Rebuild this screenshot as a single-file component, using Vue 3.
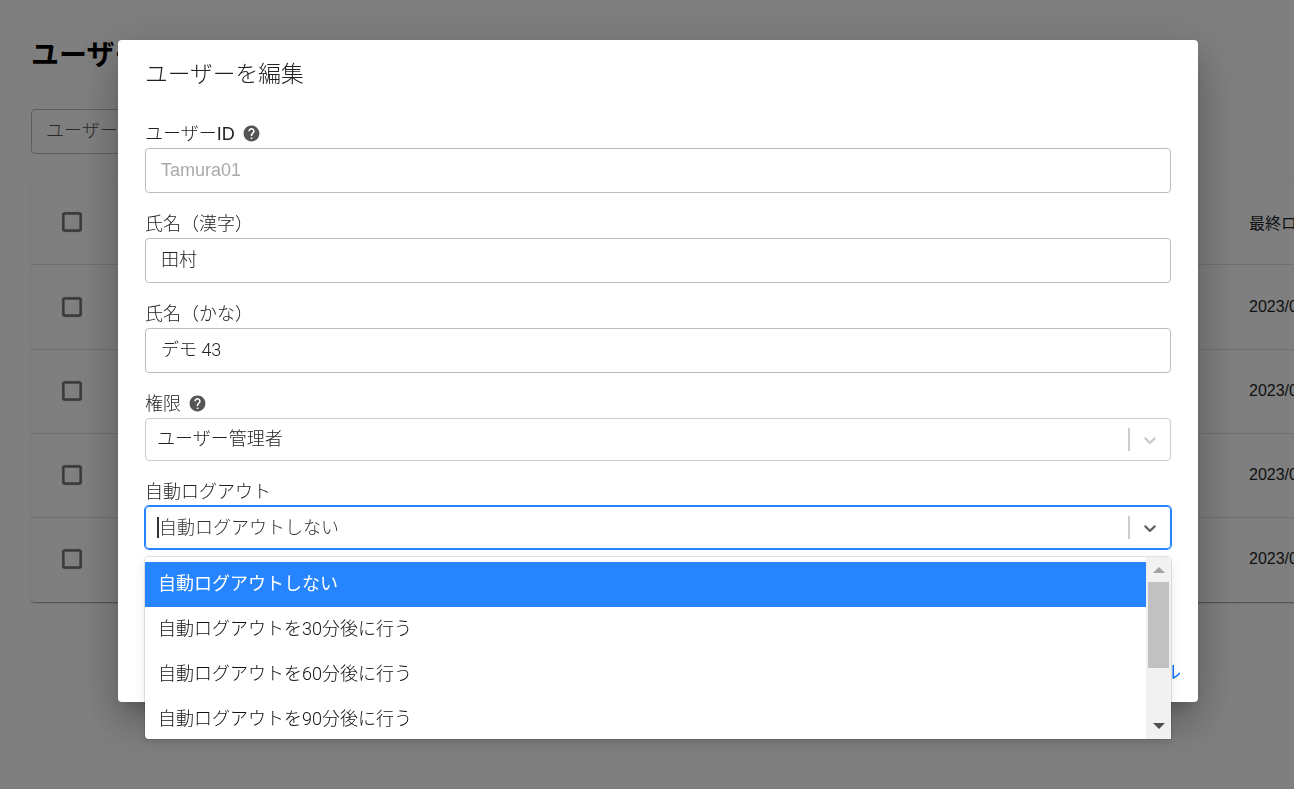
<script setup>
const helpPath = 'M12 2C6.48 2 2 6.48 2 12s4.48 10 10 10 10-4.48 10-10S17.52 2 12 2zm1 17h-2v-2h2v2zm2.07-7.75l-.9.92C13.45 12.9 13 13.5 13 15h-2v-.5c0-1.1.45-2.1 1.17-2.83l1.24-1.26c.37-.36.59-.86.59-1.41 0-1.1-.9-2-2-2s-2 .9-2 2H8c0-2.21 1.79-4 4-4s4 1.79 4 4c0 .88-.36 1.68-.93 2.25z'
const chevron = 'M4.516 7.548c0.436-0.446 1.043-0.481 1.576 0l3.908 3.747 3.908-3.747c0.533-0.481 1.141-0.446 1.574 0 0.436 0.445 0.408 1.197 0 1.615-0.406 0.418-4.695 4.502-4.695 4.502-0.217 0.223-0.502 0.335-0.787 0.335s-0.57-0.112-0.789-0.335c0 0-4.287-4.084-4.695-4.502s-0.436-1.17 0-1.615z'
const checkbox = 'M19 5v14H5V5h14m0-2H5c-1.1 0-2 .9-2 2v14c0 1.1.9 2 2 2h14c1.1 0 2-.9 2-2V5c0-1.1-.9-2-2-2z'
const rows = [
  { id: 1, text: '2023/03/01', cls: 'r1' },
  { id: 2, text: '2023/03/01', cls: 'r2' },
  { id: 3, text: '2023/03/01', cls: 'r2' },
  { id: 4, text: '2023/03/01', cls: 'r2' }
]
const options = ['自動ログアウトしない', '自動ログアウトを30分後に行う', '自動ログアウトを60分後に行う', '自動ログアウトを90分後に行う']
</script>

<template>
  <div class="page">
    <h1 class="title">ユーザー一覧</h1>
    <div class="search">ユーザーを検索</div>
    <div class="card">
      <div class="row head">
        <svg class="check" viewBox="0 0 24 24"><path :d="checkbox" /></svg>
        <span class="date">最終ログイン</span>
      </div>
      <div v-for="r in rows" :key="r.id" class="row" :class="r.cls">
        <svg class="check" viewBox="0 0 24 24"><path :d="checkbox" /></svg>
        <span class="date">{{ r.text }}</span>
      </div>
    </div>
  </div>

  <div class="overlay"></div>

  <div class="modal">
    <h2 class="modal-title">ユーザーを編集</h2>

    <div class="group">
      <label class="label">ユーザーID<svg class="help" viewBox="0 0 24 24"><path :d="helpPath" /></svg></label>
      <div class="input placeholder">Tamura01</div>
    </div>
    <div class="group">
      <label class="label">氏名（漢字）</label>
      <div class="input">田村</div>
    </div>
    <div class="group">
      <label class="label">氏名（かな）</label>
      <div class="input">デモ 43</div>
    </div>
    <div class="group">
      <label class="label">権限<svg class="help" viewBox="0 0 24 24"><path :d="helpPath" /></svg></label>
      <div class="select disabled">
        <span class="value">ユーザー管理者</span>
        <span class="sep"></span>
        <svg class="chev" viewBox="0 0 20 20"><path :d="chevron" /></svg>
      </div>
    </div>
    <div class="group">
      <label class="label">自動ログアウト</label>
      <div class="select focused">
        <span class="value"><i class="caret"></i>自動ログアウトしない</span>
        <span class="sep"></span>
        <svg class="chev" viewBox="0 0 20 20"><path :d="chevron" /></svg>
        <div class="menu">
          <div class="list">
            <div v-for="(o, i) in options" :key="o" class="option" :class="{ active: i === 0 }">{{ o }}</div>
          </div>
          <div class="scrollbar">
            <i class="tri up"></i>
            <i class="thumb"></i>
            <i class="tri down"></i>
          </div>
        </div>
      </div>
    </div>

    <div class="footer">
      <a class="cancel">キャンセル</a>
    </div>
  </div>
</template>

<style>
html, body { margin: 0; height: 100%; overflow: hidden; background: #fff; }
</style>

<style scoped>
.page, .modal {
  font-family: "Liberation Sans", "Noto Sans CJK JP", sans-serif;
  color: #212529;
}
.page {
  box-sizing: border-box;
  width: 1294px;
  height: 789px;
  padding: 38px 0 0 31px;
  overflow: hidden;
}
.title {
  margin: 0;
  font-size: 28px;
  line-height: 36px;
  font-weight: 700;
  color: #000;
}
.search {
  box-sizing: border-box;
  width: 420px;
  height: 45px;
  margin-top: 35px;
  padding: 0 14px;
  border: 1px solid #bdbdbd;
  border-radius: 4px;
  font-size: 18px;
  font-weight: 300;
  line-height: 43px;
  color: #555;
}
.card {
  width: 1500px;
  margin-top: 29px;
  border-radius: 4px;
  background: #fff;
  box-shadow: 0 2px 1px -1px rgba(0,0,0,.2), 0 1px 1px 0 rgba(0,0,0,.14), 0 1px 3px 0 rgba(0,0,0,.12);
}
.row {
  box-sizing: border-box;
  display: flex;
  align-items: center;
  padding-left: 28px;
  padding-bottom: 1px;
  height: 84px;
  border-bottom: 1px solid #e0e0e0;
  font-size: 16px;
}
.row:last-child { border-bottom: 0; padding-bottom: 2px; }
.head { height: 82px; padding-bottom: 3px; }
.r1 { height: 85px; padding-bottom: 0; }
.check { width: 26px; height: 26px; fill: rgba(0,0,0,.54); flex: none; stroke: rgba(0,0,0,.54); stroke-width: .3; }
.date { margin-left: 1164px; white-space: nowrap; }
.overlay {
  position: fixed;
  inset: 0;
  background: rgba(0,0,0,.5);
}
.modal {
  position: fixed;
  left: 118px;
  top: 40px;
  width: 1080px;
  height: 662px;
  box-sizing: border-box;
  padding: 19px 27px 0;
  display: flex;
  flex-direction: column;
  background: #fff;
  border-radius: 4px;
  box-shadow: 0 11px 15px -7px rgba(0,0,0,.2), 0 24px 38px 3px rgba(0,0,0,.14), 0 9px 46px 8px rgba(0,0,0,.12);
  color: #222;
  font-weight: 300;
}
.modal-title {
  margin: 0 0 32px;
  font-size: 22.75px;
  line-height: 30px;
  font-weight: 300;
}
.group { margin-bottom: 18px; }
.label {
  display: flex;
  align-items: center;
  gap: 7px;
  height: 24px;
  margin-bottom: 3px;
  padding-top: 1px;
  box-sizing: border-box;
  font-size: 18px;
  line-height: 24px;
  white-space: pre;
}
.help { width: 19px; height: 19px; fill: #555; flex: none; margin-top: -1px; }
.input {
  box-sizing: border-box;
  height: 45px;
  padding: 0 15px;
  border: 1px solid #bdbdbd;
  border-radius: 4px;
  font-family: Roboto, "Noto Sans CJK JP", sans-serif;
  font-size: 18px;
  line-height: 41px;
  color: #222;
}
.placeholder {
  font-family: "Liberation Sans", "Noto Sans CJK JP", sans-serif;
  line-height: 43px;
  color: #aaa;
}
.select {
  position: relative;
  box-sizing: border-box;
  height: 43px;
  display: flex;
  align-items: center;
  padding: 0 10px 0 11px;
  border: 1px solid #ccc;
  border-radius: 4px;
  font-size: 18px;
  color: #222;
}
.select.focused {
  border-color: #2684ff;
  box-shadow: 0 0 0 1px #2684ff;
  color: #333;
}
.value { flex: 1; display: flex; align-items: center; white-space: nowrap; margin-bottom: 5px; }
.focused .value { margin-bottom: 4px; }
.caret { width: 2px; height: 21px; background: #333; flex: none; margin-top: 4px; }
.sep { width: 2px; height: 23px; background: #ccc; flex: none; margin-right: 10px; }
.chev { width: 20px; height: 20px; flex: none; fill: #666; }
.disabled .chev { fill: #ccc; }
.menu {
  position: absolute;
  left: -1px;
  right: -1px;
  top: 50px;
  height: 182px;
  display: flex;
  border-radius: 4px 4px 0 4px;
  background: #fff;
  box-shadow: 0 0 0 1px rgba(0,0,0,.1), 0 4px 11px rgba(0,0,0,.1);
  overflow: hidden;
  z-index: 2;
}
.list { flex: 1; padding-top: 5px; min-width: 0; }
.option {
  box-sizing: border-box;
  height: 45px;
  padding: 0 13px;
  font-family: Roboto, "Noto Sans CJK JP", sans-serif;
  font-size: 18px;
  line-height: 44px;
  color: #111;
  white-space: nowrap;
}
.option.active { background: #2684ff; color: #fff; font-weight: 400; }
.scrollbar {
  width: 25px;
  flex: none;
  display: flex;
  flex-direction: column;
  align-items: center;
  background: #f1f1f1;
}
.thumb { width: 21px; height: 86px; background: #c1c1c1; margin-top: 9px; }
.tri { width: 0; height: 0; border-left: 6px solid transparent; border-right: 6px solid transparent; }
.tri.up { border-bottom: 6px solid #a3a3a3; margin-top: 10px; }
.tri.down { border-top: 6px solid #505050; margin-top: auto; margin-bottom: 10px; }
.footer {
  margin-top: auto;
  display: flex;
  justify-content: flex-end;
  margin-right: -10px;
  padding-bottom: 16px;
}
.cancel {
  font-size: 18px;
  font-weight: 400;
  line-height: 26px;
  color: #0d6efd;
}
</style>
